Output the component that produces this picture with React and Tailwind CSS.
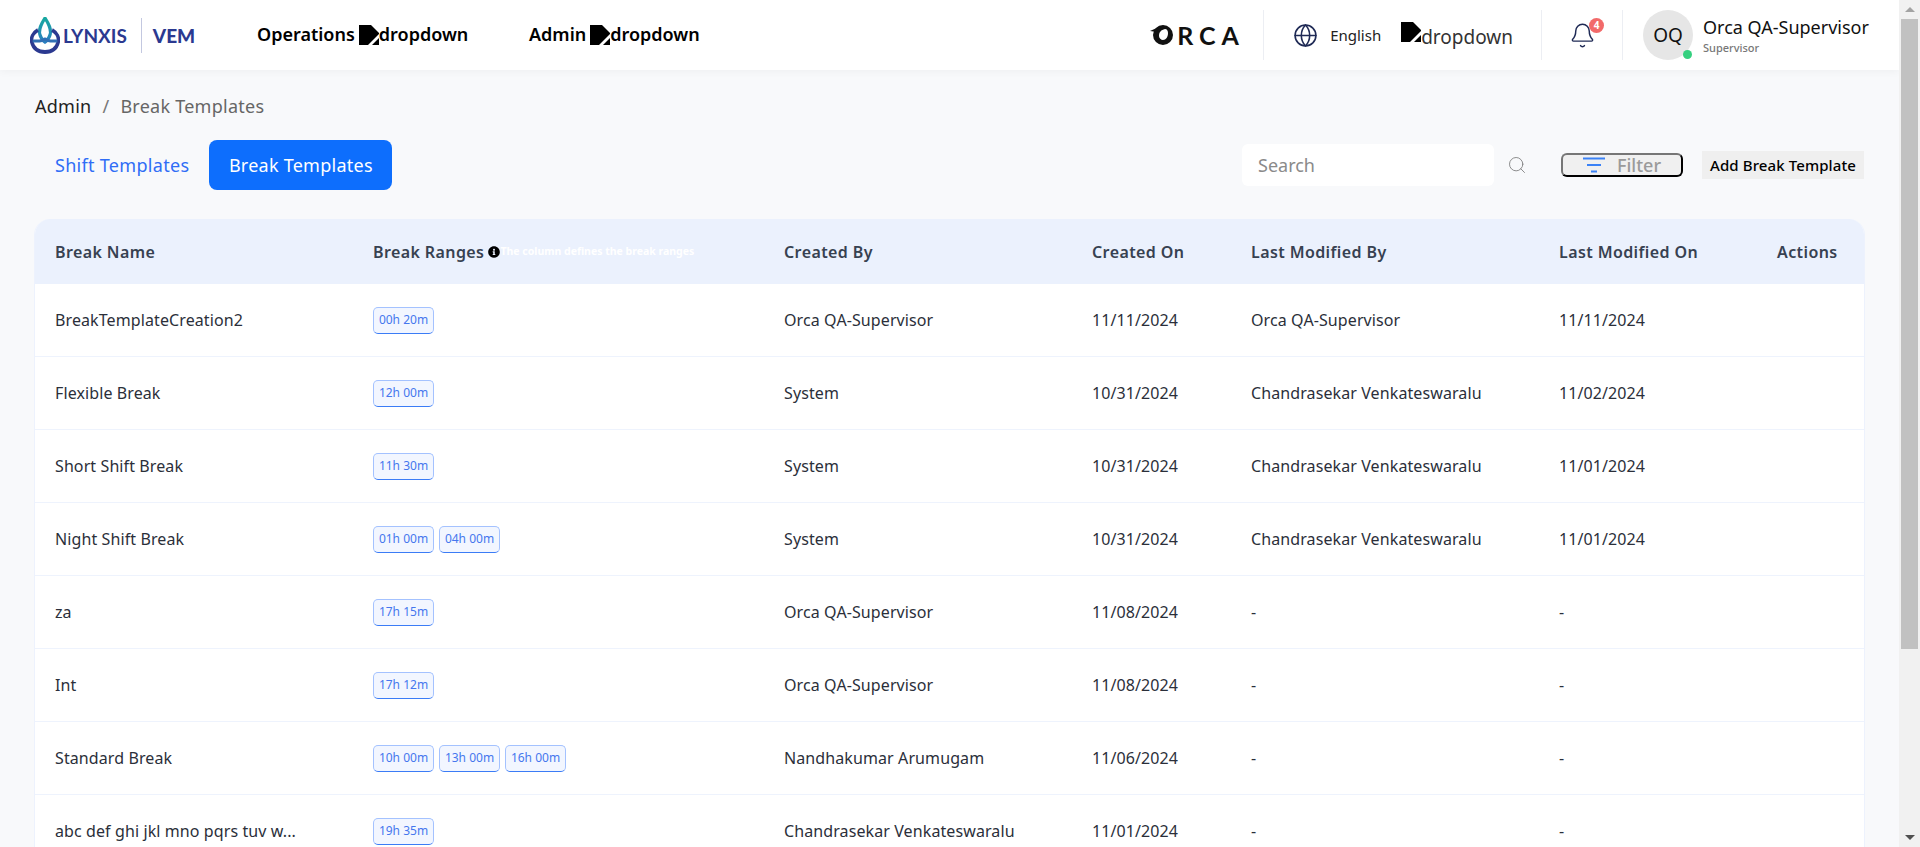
import { Bell, Globe, Search } from 'lucide-react'
import { FaInfoCircle } from 'react-icons/fa'

const rows = [
  { name: 'BreakTemplateCreation2', ranges: ['00h 20m'], by: 'Orca QA-Supervisor', on: '11/11/2024', modBy: 'Orca QA-Supervisor', modOn: '11/11/2024' },
  { name: 'Flexible Break', ranges: ['12h 00m'], by: 'System', on: '10/31/2024', modBy: 'Chandrasekar Venkateswaralu', modOn: '11/02/2024' },
  { name: 'Short Shift Break', ranges: ['11h 30m'], by: 'System', on: '10/31/2024', modBy: 'Chandrasekar Venkateswaralu', modOn: '11/01/2024' },
  { name: 'Night Shift Break', ranges: ['01h 00m', '04h 00m'], by: 'System', on: '10/31/2024', modBy: 'Chandrasekar Venkateswaralu', modOn: '11/01/2024' },
  { name: 'za', ranges: ['17h 15m'], by: 'Orca QA-Supervisor', on: '11/08/2024', modBy: '-', modOn: '-' },
  { name: 'Int', ranges: ['17h 12m'], by: 'Orca QA-Supervisor', on: '11/08/2024', modBy: '-', modOn: '-' },
  { name: 'Standard Break', ranges: ['10h 00m', '13h 00m', '16h 00m'], by: 'Nandhakumar Arumugam', on: '11/06/2024', modBy: '-', modOn: '-' },
  { name: 'abc def ghi jkl mno pqrs tuv w...', ranges: ['19h 35m'], by: 'Chandrasekar Venkateswaralu', on: '11/01/2024', modBy: '-', modOn: '-' },
]

const cell = 'pl-[20px] whitespace-nowrap border-b border-[#eef3fd]'

function BrokenImg(){
  return (
    <svg width="20" height="20" viewBox="0 0 20 20" className="shrink-0">
      <path d="M0 0H12L20 8V9L9 20H0Z" fill="#000"/>
      <path d="M20 13V20H13Z" fill="#000"/>
    </svg>
  )
}

function Logo(){
  return (
    <div className="flex items-center w-[167px] h-[37px]">
      <svg width="30" height="37" viewBox="0 0 34 37" preserveAspectRatio="none" className="shrink-0 ml-[1px] mr-[3px]">
        <defs>
          <linearGradient id="drop" x1="0" y1="0" x2="0" y2="1">
            <stop offset="0" stopColor="#17a8a0"/>
            <stop offset="1" stopColor="#2a7fc0"/>
          </linearGradient>
        </defs>
        <path d="M17 1C22 8 24 12 23 17C22 21 20 23 17 25C14 23 12 21 11 17C10 12 12 8 17 1Z" fill="none" stroke="url(#drop)" strokeWidth="3.5"/>
        <path d="M9 13C3 16 1 21 2 25C4 32 10 35 17 35C24 35 30 32 32 25C33 21 31 16 25 13" fill="none" stroke="#2b3990" strokeWidth="4"/>
        <path d="M3 24C8 24 13 25 17 22C21 25 26 24 31 24" fill="none" stroke="#2f6fb5" strokeWidth="3"/>
      </svg>
      <span className="font-['Lato'] font-bold text-[19px] leading-none text-[#2b3990]">LYNXIS</span>
      <span className="ml-[14px] w-px h-[35px] bg-[#c3c8e0]"></span>
      <span className="ml-[11px] font-['Lato'] font-black text-[19px] leading-none text-[#2b3990]">VEM</span>
    </div>
  )
}

function OrcaLogo(){
  return (
    <div className="flex items-center w-[88px]">
      <svg width="24" height="20" viewBox="0 0 24 20" className="shrink-0">
        <path d="M13 0A10 10 0 1 0 13 20A10 10 0 1 0 13 0ZM15 4C11 5 9 7 9 11C9 13 11 15 13 15C16 15 18 12 18 8C18 6 17 4 15 4Z" fill="#111" fillRule="evenodd"/>
        <path d="M0 6L9 2L7 7Z" fill="#111"/>
      </svg>
      <span className="ml-[3px] font-['Lato'] font-bold text-[25px] leading-none tracking-[6px] text-[#111]">RCA</span>
    </div>
  )
}

function Chip({ children }){
  return (
    <span className="inline-flex items-center justify-center w-[61px] h-[27px] rounded-[5px] border border-[#a4c2ff] border-b-[#3b7cf6] bg-[#f2f6ff] text-[12px] text-[#4577ee]">
      {children}
    </span>
  )
}

function Scrollbar(){
  return (
    <div className="w-[21px] shrink-0 h-full bg-[#f1f1f1] flex flex-col items-center">
      <div className="h-[19px] flex items-center justify-center">
        <div className="w-0 h-0 border-x-[5px] border-x-transparent border-b-[5px] border-b-[#a3a3a3]"></div>
      </div>
      <div className="w-[17px] h-[630px] bg-[#c1c1c1]"></div>
      <div className="mt-auto h-[19px] flex items-center justify-center">
        <div className="w-0 h-0 border-x-[5px] border-x-transparent border-t-[5px] border-t-[#505050]"></div>
      </div>
    </div>
  )
}

function Header(){
  return (
    <header className="h-[70px] bg-white shadow-[0_2px_8px_rgba(0,0,0,0.04)] flex items-center pl-[29px] shrink-0">
      <Logo/>
      <nav className="ml-[61px] flex items-start text-[18px] font-semibold text-black">
        <div className="flex items-center w-[272px]">
          <span className="pb-[2px]">Operations</span>
          <span className="ml-1"><BrokenImg/></span>
          <span className="pb-[2px]">dropdown</span>
        </div>
        <div className="flex items-center">
          <span className="pb-[2px]">Admin</span>
          <span className="ml-1"><BrokenImg/></span>
          <span className="pb-[2px]">dropdown</span>
        </div>
      </nav>
      <div className="ml-auto flex items-center h-[50px]">
        <OrcaLogo/>
        <div className="w-px h-[50px] bg-[#eceef3] ml-[25px]"></div>
        <Globe size={25} strokeWidth={1.5} className="ml-[29px] text-[#1f2a55]"/>
        <span className="ml-[12px] text-[15px] text-[#222]">English</span>
        <div className="ml-[20px] flex items-start">
          <BrokenImg/>
          <span className="text-[19px] leading-[24px] mt-[3px] text-[#333]">dropdown</span>
        </div>
        <div className="w-px h-[50px] bg-[#eceef3] ml-[28px]"></div>
        <div className="relative w-[80px] flex justify-center">
          <Bell size={27} strokeWidth={1.3} className="text-[#1f2a55]"/>
          <span className="absolute left-[47px] -top-[4px] w-[15px] h-[15px] rounded-full bg-[#f26a6a] text-white text-[10px] font-bold leading-[15px] text-center">4</span>
        </div>
        <div className="w-px h-[50px] bg-[#eceef3]"></div>
        <div className="relative ml-[20px] w-[50px] h-[50px] rounded-full bg-[#e6e6e6] flex items-center justify-center text-[19px] text-[#111]">
          OQ
          <span className="absolute right-[1px] bottom-[1px] w-[9px] h-[9px] rounded-full bg-[#35d07f]"></span>
        </div>
        <div className="ml-[10px] w-[196px] flex flex-col">
          <span className="text-[18px] leading-[24px] text-[#111]">Orca QA-Supervisor</span>
          <span className="text-[11px] leading-[14px] font-medium text-[#777] mt-[2px]">Supervisor</span>
        </div>
      </div>
    </header>
  )
}

export default function App(){
  return (
    <div className="flex h-[847px] w-full overflow-hidden font-['Noto_Sans',sans-serif] bg-[#f8f9fb]">
      <div className="flex-1 min-w-0 flex flex-col">
        <Header/>
        <main className="pl-[34px] pr-[34px] flex flex-col">
          <div className="ml-[1px] mt-[24px] h-[24px] flex items-center text-[18px] leading-[24px] tracking-[0.25px]">
            <span className="text-[#222]">Admin</span>
            <span className="mx-[11px] text-[#777]">/</span>
            <span className="text-[#666]">Break Templates</span>
          </div>
          <div className="mt-[22px] flex items-center h-[50px]">
            <button className="ml-[21px] text-[18px] tracking-[0.3px] text-[#2f6df6]">Shift Templates</button>
            <button className="ml-[20px] w-[183px] h-[50px] rounded-[8px] bg-[#0d6efd] text-white text-[18px] tracking-[0.25px]">Break Templates</button>
            <div className="ml-auto mr-[1px] flex items-center">
              <div className="w-[252px] h-[42px] bg-white rounded-[6px] flex items-center pl-[16px] text-[18px] text-[#8a8a8a]">Search</div>
              <Search size={20} strokeWidth={1} className="ml-[13px] text-[#777]"/>
              <button className="ml-[34px] w-[122px] h-[24px] rounded-[6px] border-2 border-[#767676] border-r-black border-b-black bg-[#f0f0f0] flex items-center justify-center gap-[12px] text-[18px] font-medium text-[#9a9a9a]">
                <svg width="22" height="16" viewBox="0 0 22 16">
                  <path d="M0 1.5H22M4 8H18M8 14.5H14" stroke="#3b82f6" strokeWidth="2.2"/>
                </svg>
                Filter
              </button>
              <button className="ml-[19px] w-[162px] h-[28px] bg-[#efefef] text-[15px] font-medium tracking-[0.1px] text-black whitespace-nowrap">Add Break Template</button>
            </div>
          </div>
          <div className="mt-[29px] border-x border-[#edf2fd] rounded-t-[16px] overflow-hidden bg-white">
            <table className="w-full table-fixed border-separate border-spacing-0 text-left">
              <thead>
                <tr className="h-[65px] bg-[#ebf1fd] text-[16px] tracking-[0.4px] text-[#374151]">
                  <th className="w-[318px] pl-[20px] font-semibold">Break Name</th>
                  <th className="w-[411px] pl-[20px] font-semibold">
                    <div className="flex items-center">
                      Break Ranges
                      <FaInfoCircle size={12} className="ml-[4px] text-black"/>
                      <span className="text-[10.5px] tracking-normal font-bold text-white whitespace-nowrap">The column defines the break ranges</span>
                    </div>
                  </th>
                  <th className="w-[308px] pl-[20px] font-semibold">Created By</th>
                  <th className="w-[159px] pl-[20px] font-semibold">Created On</th>
                  <th className="w-[308px] pl-[20px] font-semibold">Last Modified By</th>
                  <th className="w-[218px] pl-[20px] font-semibold">Last Modified On</th>
                  <th className="pl-[20px] font-semibold">Actions</th>
                </tr>
              </thead>
              <tbody>
                {rows.map(r=>(
                  <tr key={r.name} className="h-[73px] text-[16px] tracking-[0.1px] text-[#2b2f3a]">
                    <td className={cell}>{r.name}</td>
                    <td className={cell}>
                      <div className="flex gap-[5px] tracking-normal">
                        {r.ranges.map(x=><Chip key={x}>{x}</Chip>)}
                      </div>
                    </td>
                    <td className={cell}>{r.by}</td>
                    <td className={cell}>{r.on}</td>
                    <td className={cell}>{r.modBy}</td>
                    <td className={cell}>{r.modOn}</td>
                    <td className={cell}></td>
                  </tr>
                ))}
              </tbody>
            </table>
          </div>
        </main>
      </div>
      <Scrollbar/>
    </div>
  )
}
